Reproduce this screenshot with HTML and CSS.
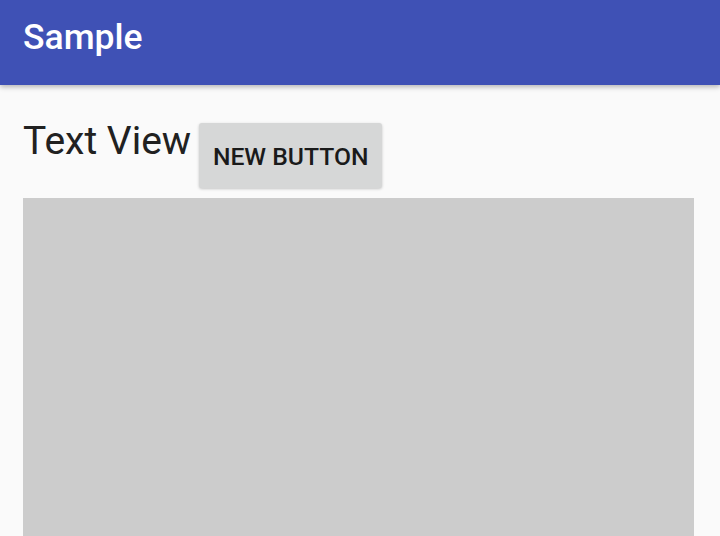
FILE: index.html
```html
<!DOCTYPE html>
<html>
<head>
<meta charset="utf-8">
<link rel="stylesheet" href="styles.css">
</head>
<body>
<header class="appbar">
  <h1 class="title">Sample</h1>
</header>
<main class="content">
  <div class="row">
    <span class="textview">Text View</span>
    <button class="btn">NEW BUTTON</button>
  </div>
  <div class="box"></div>
</main>
</body>
</html>
```
FILE: styles.css
```css
html, body {
  margin: 0;
  padding: 0;
  height: 100%;
  overflow: hidden;
}
body {
  background: #fafafa;
  font-family: Roboto, "Noto Sans", sans-serif;
  display: flex;
  flex-direction: column;
}
.appbar {
  flex: none;
  height: 85px;
  background: #3f51b5;
  box-shadow: 0 2px 5px rgba(0,0,0,0.28);
  position: relative;
  z-index: 1;
  display: flex;
  align-items: center;
}
.title {
  margin: 0 0 12px 23px;
  color: #fff;
  font-weight: 500;
  font-size: 35.5px;
  line-height: 40px;
}
.content {
  flex: 1;
  min-height: 0;
  display: flex;
  flex-direction: column;
  padding: 0 26px 0 23px;
}
.row {
  flex: none;
  display: flex;
  align-items: flex-start;
  padding-top: 34px;
}
.textview {
  font-size: 39px;
  line-height: 45px;
  color: #212121;
}
.btn {
  flex: none;
  margin-left: 8px;
  margin-top: 4px;
  height: 65px;
  width: 183px;
  padding: 2px 0 0;
  border: none;
  border-radius: 3px;
  background: #d6d7d7;
  box-shadow: 0 1px 3px rgba(0,0,0,0.22);
  font-family: Roboto, "Noto Sans", sans-serif;
  font-weight: 500;
  font-size: 24.7px;
  color: #1a1a1a;
}
.box {
  flex: 1;
  margin-top: 10px;
  background: #cccccc;
}
```
